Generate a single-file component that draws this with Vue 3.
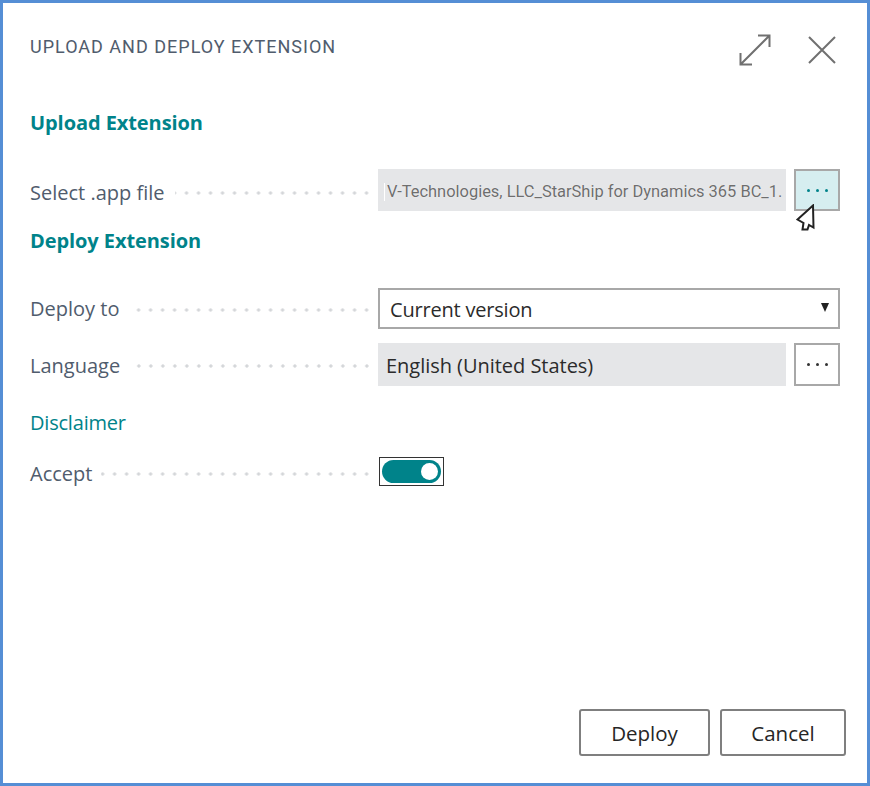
<script setup>
const teal = '#00838a'
</script>

<template>
  <div class="dialog">
    <header class="head">
      <h1>UPLOAD AND DEPLOY EXTENSION</h1>
      <svg class="icon expand" width="32" height="32" viewBox="0 0 32 32">
        <path d="M1.5 30.5 L30.5 1.5 M19 1.5 H30.5 V13 M1.5 19 V30.5 H13" fill="none" stroke="#707070" stroke-width="2" />
      </svg>
      <svg class="icon close" width="28" height="28" viewBox="0 0 28 28">
        <path d="M1 1 L27 27 M27 1 L1 27" fill="none" stroke="#707070" stroke-width="2" />
      </svg>
    </header>

    <h2 class="upload">Upload Extension</h2>

    <div class="row file-row">
      <div class="label"><span>Select .app file</span><i class="dots"></i></div>
      <div class="field readonly file"><b class="caret"></b>V-Technologies, LLC_StarShip for Dynamics 365 BC_1.</div>
      <button class="more active"><em></em><em></em><em></em></button>
      <svg class="pointer" width="20" height="27" viewBox="0 0 20 27">
        <path d="M17 1.5 L1.5 15.5 L7.5 19 L6.5 25.5 L11.5 25.5 L13 21 L17.5 23.5 Z" fill="#fff" stroke="#222" stroke-width="2" stroke-linejoin="miter" />
      </svg>
    </div>

    <h2 class="deploy">Deploy Extension</h2>

    <div class="row deploy-row">
      <div class="label"><span>Deploy to</span><i class="dots"></i></div>
      <div class="field select">Current version<span class="arrow"></span></div>
    </div>

    <div class="row lang-row">
      <div class="label"><span>Language</span><i class="dots"></i></div>
      <div class="field readonly">English (United States)</div>
      <button class="more"><em></em><em></em><em></em></button>
    </div>

    <a class="disclaimer">Disclaimer</a>

    <div class="row accept-row">
      <div class="label"><span>Accept</span><i class="dots"></i></div>
      <div class="toggle-box">
        <div class="toggle" :style="{ background: teal }"><span class="knob"></span></div>
      </div>
    </div>

    <footer class="foot">
      <button class="action deploy-btn">Deploy</button>
      <button class="action cancel-btn">Cancel</button>
    </footer>
  </div>
</template>

<style scoped>
.dialog {
  box-sizing: border-box;
  width: 870px;
  height: 786px;
  border: 3px solid #558ed5;
  background: #fff;
  padding: 0 27px;
  display: flex;
  flex-direction: column;
  font-family: "Open Sans", "Noto Sans", sans-serif;
  position: relative;
}

.head {
  height: 88px;
  display: flex;
  align-items: flex-start;
}

h1 {
  margin: 33px 0 0;
  font-family: Roboto, sans-serif;
  font-weight: 400;
  font-size: 18px;
  line-height: 22px;
  letter-spacing: 1px;
  color: #505c6d;
  flex: 1;
}

.icon {
  display: block;
}

.expand {
  margin-top: 31px;
  margin-right: 37px;
}

.close {
  margin-top: 33px;
  margin-right: 4px;
}

h2 {
  margin: 0;
  font-size: 20px;
  line-height: 28px;
  font-weight: 700;
  color: #00838a;
  letter-spacing: -0.08px;
}

.upload {
  margin-top: 18px;
}

.row {
  display: flex;
  align-items: center;
  position: relative;
}

.label {
  width: 348px;
  display: flex;
  align-items: center;
  font-size: 20px;
  color: #505c6d;
  flex: none;
}

.label span {
  white-space: nowrap;
  margin-right: 11px;
}

.dots {
  flex: 1;
  height: 4px;
  margin-right: 9px;
  margin-top: 2px;
  background-image: radial-gradient(circle at 10px 2px, #d4d6d9 1.5px, transparent 1.7px);
  background-size: 12px 4px;
  background-repeat: repeat-x;
  background-position: right center;
}

.field {
  box-sizing: border-box;
  font-size: 20px;
  color: #2b2b2b;
  white-space: nowrap;
  overflow: hidden;
}

.readonly {
  width: 408px;
  background: #e5e6e8;
  padding-left: 8px;
}

.file-row {
  margin-top: 32px;
  height: 42px;
}

.file-row .label {
  padding-top: 4px;
  box-sizing: border-box;
}

.file {
  height: 42px;
  padding-top: 3px;
  font-family: Roboto, sans-serif;
  font-size: 16.45px;
  color: #6e6e6e;
  text-shadow: 0 0 1px #fff;
  padding-left: 6px;
  display: flex;
  align-items: center;
}

.caret {
  width: 1px;
  height: 18px;
  background: #fff;
  margin-right: 2px;
  flex: none;
}

.more {
  box-sizing: border-box;
  width: 46px;
  height: 100%;
  margin-left: 8px;
  padding: 0;
  border: 2px solid #a8a8a8;
  background: #fff;
  display: flex;
  align-items: center;
  justify-content: center;
  gap: 6px;
}

.more em {
  width: 3px;
  height: 3px;
  border-radius: 50%;
  background: #333;
}

.more.active {
  background: #d6eef0;
}

.more.active em {
  background: #00838a;
}

.pointer {
  position: absolute;
  left: 766px;
  top: 35px;
}

.deploy {
  margin-top: 16px;
}

.deploy-row {
  margin-top: 33px;
  height: 41px;
}

.select {
  width: 462px;
  height: 41px;
  line-height: 39px;
  border: 2px solid #a8a8a8;
  padding-left: 10px;
  letter-spacing: -0.2px;
  position: relative;
}

.arrow {
  position: absolute;
  right: 9px;
  top: 13px;
  width: 0;
  height: 0;
  border-left: 4.5px solid transparent;
  border-right: 4.5px solid transparent;
  border-top: 9px solid #222;
}

.lang-row {
  margin-top: 14px;
  height: 43px;
}

.lang-row .label {
  padding-top: 1px;
  box-sizing: border-box;
}

.lang-row .readonly {
  height: 43px;
  line-height: 45px;
  letter-spacing: -0.03px;
}

.disclaimer {
  margin-top: 23px;
  font-size: 20px;
  line-height: 28px;
  color: #00838a;
  letter-spacing: -0.2px;
}

.accept-row {
  margin-top: 20px;
  height: 29px;
}

.accept-row .label {
  padding-top: 3px;
  box-sizing: border-box;
}

.accept-row .label span {
  margin-right: 9px;
}

.toggle-box {
  box-sizing: border-box;
  width: 65px;
  height: 29px;
  margin-left: 1px;
  border: 1px solid #333;
  display: flex;
  align-items: center;
  justify-content: center;
}

.toggle {
  width: 59px;
  height: 23px;
  border-radius: 12px;
  position: relative;
}

.knob {
  position: absolute;
  right: 3px;
  top: 3px;
  width: 17px;
  height: 17px;
  border-radius: 50%;
  background: #fff;
}

.foot {
  margin-top: auto;
  margin-bottom: 27px;
  margin-right: -6px;
  display: flex;
  justify-content: flex-end;
  gap: 10px;
}

.action {
  box-sizing: border-box;
  height: 47px;
  border: 2px solid #7f7f7f;
  border-radius: 3px;
  background: #fff;
  font-family: "Open Sans", "Noto Sans", sans-serif;
  font-size: 20.5px;
  color: #262626;
  padding: 0;
}

.deploy-btn {
  width: 131px;
}

.cancel-btn {
  width: 126px;
}
</style>

<style>
html, body {
  margin: 0;
  background: #fff;
}
</style>
